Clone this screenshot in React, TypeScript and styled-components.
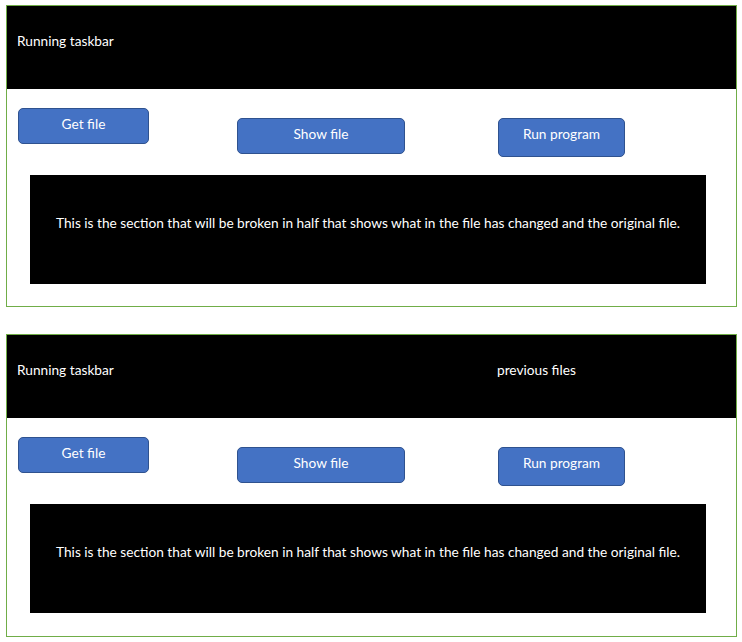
import React from "react";
import styled, { createGlobalStyle } from "styled-components";

const GlobalStyle = createGlobalStyle`
  html, body {
    margin: 0;
    padding: 0;
    background: #ffffff;
  }
  body {
    font-family: Lato, "Open Sans", "Liberation Sans", sans-serif;
  }
`;

const Page = styled.div`
  padding: 5px 0 0 6px;
  display: flex;
  flex-direction: column;
  gap: 27px;
`;

const Frame = styled.section<{ h: number }>`
  box-sizing: border-box;
  width: 731px;
  height: ${({ h }) => h}px;
  border: 1px solid #70ad47;
  display: flex;
  flex-direction: column;
`;

const Taskbar = styled.div`
  height: 83px;
  background: #000000;
  color: #ffffff;
  font-size: 13.7px;
  display: flex;
  align-items: center;
  padding: 0 0 14px 10px;
  box-sizing: border-box;
`;

const TaskLabel = styled.span<{ width?: number }>`
  width: ${({ width }) => (width ? `${width}px` : "auto")};
  flex-shrink: 0;
`;

const ButtonRow = styled.div`
  height: 86px;
  box-sizing: border-box;
  padding: 19px 0 0 11px;
  display: flex;
  align-items: flex-start;
`;

const Button = styled.button<{ w: number; h: number; top: number; left: number }>`
  box-sizing: border-box;
  width: ${({ w }) => w}px;
  height: ${({ h }) => h}px;
  margin-top: ${({ top }) => top}px;
  margin-left: ${({ left }) => left}px;
  background: #4472c4;
  border: 1px solid #2f528f;
  border-radius: 5px;
  color: #ffffff;
  font-family: Lato, "Open Sans", "Liberation Sans", sans-serif;
  font-size: 13.7px;
  line-height: 18px;
  padding: 6px 0 0 0;
  display: flex;
  align-items: flex-start;
  justify-content: center;
  cursor: pointer;
`;

const Content = styled.div`
  margin-left: 23px;
  width: 676px;
  height: 109px;
  background: #000000;
  color: #ffffff;
  font-size: 13.7px;
  display: flex;
  align-items: center;
  justify-content: center;
  padding-bottom: 15px;
  box-sizing: border-box;
`;

const Window: React.FC<{ showPrevious?: boolean; h: number }> = ({ showPrevious, h }) => (
  <Frame h={h}>
    <Taskbar>
      <TaskLabel width={showPrevious ? 480 : undefined}>Running taskbar</TaskLabel>
      {showPrevious && <TaskLabel>previous files</TaskLabel>}
    </Taskbar>
    <ButtonRow>
      <Button w={131} h={36} top={0} left={0}>
        Get file
      </Button>
      <Button w={168} h={36} top={10} left={88}>
        Show file
      </Button>
      <Button w={127} h={39} top={10} left={93}>
        Run program
      </Button>
    </ButtonRow>
    <Content>
      This is the section that will be broken in half that shows what in the
      file has changed and the original file.
    </Content>
  </Frame>
);

export default function App() {
  return (
    <>
      <GlobalStyle />
      <Page>
        <Window h={302} />
        <Window h={303} showPrevious />
      </Page>
    </>
  );
}
